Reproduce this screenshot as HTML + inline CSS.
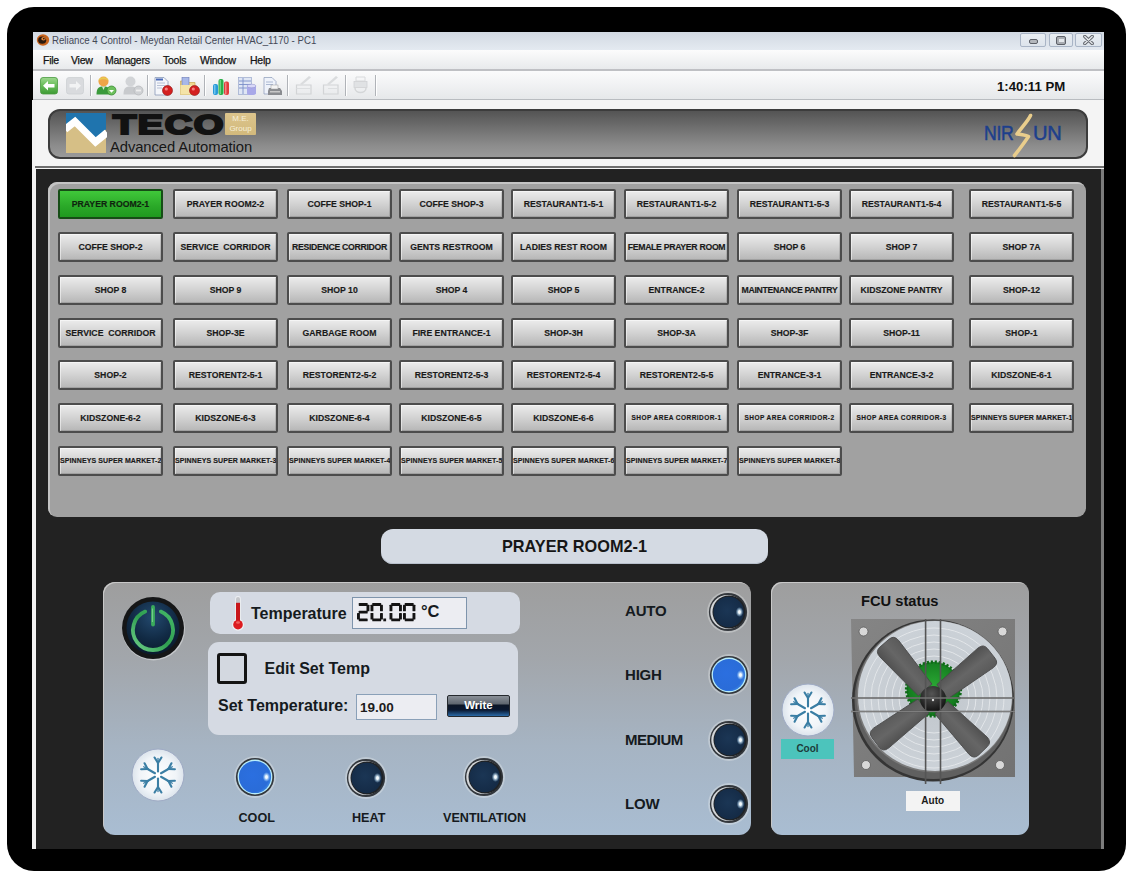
<!DOCTYPE html>
<html><head><meta charset="utf-8">
<style>
*{margin:0;padding:0;box-sizing:border-box}
html,body{width:1136px;height:881px;overflow:hidden;background:#fff;font-family:"Liberation Sans",sans-serif}
div,span,svg{position:absolute}
#frame{left:7px;top:7px;width:1119px;height:864px;background:#000;border-radius:27px}
#title{left:33px;top:32px;width:1071px;height:18px;background:linear-gradient(#d2d9e2,#e4eaf1);}
#ttext{left:51.5px;top:33.5px;font-size:11px;color:#444957;transform:scaleX(0.88);transform-origin:0 0;white-space:nowrap}
.wb{top:33px;height:14px;border:1px solid #a9b5c6;border-radius:2px;background:linear-gradient(#e8edf2,#dde4ec)}
#menu{left:33px;top:50px;width:1071px;height:21px;background:linear-gradient(#fcfcfc,#e8eaec);border-bottom:2px solid #bfc0c4}
.mi{top:54px;font-size:10.5px;color:#141414;white-space:nowrap;letter-spacing:-0.25px;-webkit-text-stroke:0.25px #141414}
#tool{left:33px;top:71px;width:1071px;height:29px;background:linear-gradient(#fbfbfc,#e6e8ea);border-bottom:1px solid #b9bcc0}
.sep{top:75px;width:1px;height:21px;background:#b0b3b8;box-shadow:1px 0 0 #fff}
#hdr{left:33px;top:100px;width:1071px;height:69px;background:#f4f4f4}
#hline{left:35px;top:165.5px;width:1069px;height:2px;background:#6e6e6e}
#dark{left:36px;top:169px;width:1065px;height:680px;background:#222}
#lstripe{left:32px;top:100px;width:4px;height:749px;background:#f2f2f2}
#rstripe{left:1101px;top:169px;width:3px;height:680px;background:#7c7c7c}
#banner{left:48px;top:109px;width:1040px;height:50px;border-radius:12px;border:2px solid #3c3c3c;background:linear-gradient(#545454,#8c8c8c 75%,#9a9a9a)}
#panel{left:48px;top:182px;width:1038px;height:335px;background:#a1a1a1;border-radius:9px;box-shadow:inset 2px 2px 0 #c4c4c4}
.b{width:105px;height:30px;border:2px solid #4c4c4c;border-radius:2px;background:linear-gradient(#ececec,#d2d2d2 50%,#b6b6b6);font-weight:bold;font-size:8.7px;color:#1a1a1a;-webkit-text-stroke:0.15px #1a1a1a;text-align:center;line-height:26px;white-space:nowrap;overflow:hidden;box-shadow:inset 1px 1px 0 rgba(255,255,255,0.5),inset -1px -1px 0 rgba(0,0,0,0.12)}
.b.g{background:linear-gradient(#40c83a,#2aa828 60%,#1f9a1f);border-color:#164d16;color:#0d260d;box-shadow:none}
.b.s{font-size:6.5px;letter-spacing:0.45px}
.b.n{letter-spacing:-0.3px}
.b.m{font-size:7px;letter-spacing:0.1px}
#rname{left:381px;top:529px;width:387px;height:35px;border-radius:12px;background:#d4dae3;box-shadow:inset 0 -1px 0 #b8c0cc}
#rtext{left:381px;top:537px;width:387px;text-align:center;font-weight:bold;font-size:16.3px;color:#161616}
#ctl{left:103px;top:582px;width:648px;height:253px;border-radius:12px;background:linear-gradient(#9e9e9e,#a2a6ab 30%,#a6b4c3 65%,#a9bdd2);box-shadow:inset 1px 1px 0 #c8c8c8}
#fcu{left:771px;top:582px;width:258px;height:253px;border-radius:11px;background:linear-gradient(#9e9e9e,#a2a6ab 30%,#a6b4c3 65%,#a9bdd2);box-shadow:inset 1px 1px 0 #c8c8c8}
.lbl{font-weight:bold;color:#151a20;white-space:nowrap}
</style></head><body>
<div id="frame"></div>
<div id="title"></div>
<svg style="left:36px;top:33px" width="14" height="14" viewBox="0 0 14 14">
  <ellipse cx="7" cy="7" rx="6.2" ry="5.8" fill="#c8641e"/>
  <ellipse cx="6.2" cy="7.2" rx="4" ry="3.6" fill="#2a1a10"/>
  <ellipse cx="7.5" cy="5.8" rx="2.2" ry="1.8" fill="#e8883a"/>
  <circle cx="7.8" cy="5.6" r="0.9" fill="#2a1a10"/>
</svg>

<div id="ttext">Reliance 4 Control - Meydan Retail Center HVAC_1170 - PC1</div>
<div class="wb" style="left:1020px;width:26px"></div>
<div class="wb" style="left:1049px;width:24px"></div>
<div class="wb" style="left:1075px;width:27px"></div>
<div style="left:1028.5px;top:38.5px;width:9.5px;height:5px;border:1.2px solid #5c6068;border-radius:2px;background:#b4b8bd"></div>
<div style="left:1056px;top:36px;width:10px;height:8.5px;border:1.3px solid #5c6068;border-radius:2px;background:#a8acb2"></div>
<div style="left:1058.5px;top:39px;width:5px;height:2.5px;background:#e4e8ec"></div>
<svg style="left:1083px;top:35px" width="11" height="10" viewBox="0 0 11 10"><path d="M1.8 1.5 L9.2 8.5 M9.2 1.5 L1.8 8.5" stroke="#63676e" stroke-width="3.4" stroke-linecap="round"/><path d="M1.8 1.5 L9.2 8.5 M9.2 1.5 L1.8 8.5" stroke="#e6e9ec" stroke-width="1.4" stroke-linecap="round"/></svg>

<div id="menu"></div>
<span class="mi" style="left:43px">File</span>
<span class="mi" style="left:71px">View</span>
<span class="mi" style="left:105px">Managers</span>
<span class="mi" style="left:163px">Tools</span>
<span class="mi" style="left:200px">Window</span>
<span class="mi" style="left:250px">Help</span>
<div id="tool"></div>
<div class="sep" style="left:90px"></div>
<div class="sep" style="left:147px"></div>
<div class="sep" style="left:204px"></div>
<div class="sep" style="left:287px"></div>
<div class="sep" style="left:345px"></div>
<div class="sep" style="left:375px"></div>
<svg style="left:40px;top:77px" width="18" height="18" viewBox="0 0 18 18">
  <defs><linearGradient id="tg1" x1="0" y1="0" x2="0" y2="1"><stop offset="0" stop-color="#9ed890"/><stop offset="0.45" stop-color="#6cbf5c"/><stop offset="1" stop-color="#3c9a34"/></linearGradient></defs>
  <rect x="0.5" y="0.5" width="17" height="16.5" rx="2.5" fill="url(#tg1)" stroke="#4a9a40" stroke-width="0.8"/>
  <path d="M3 8.7 L8 4 L8 7 L14.5 7 L14.5 10.5 L8 10.5 L8 13.5 Z" fill="#fff"/>
</svg>
<svg style="left:66px;top:77px" width="18" height="18" viewBox="0 0 18 18">
  <rect x="0.5" y="0.5" width="17" height="16.5" rx="2.5" fill="#d9dbde" stroke="#cdd0d3" stroke-width="0.8"/>
  <path d="M15 8.7 L10 4 L10 7 L3.5 7 L3.5 10.5 L10 10.5 L10 13.5 Z" fill="#f2f3f4"/>
</svg>
<svg style="left:95px;top:75px" width="22" height="21" viewBox="0 0 22 21">
  <path d="M1.5 19.5 C1.5 13 4 11.5 8.5 11.5 C13 11.5 15.5 13 15.5 19.5 Z" fill="#3a9a3c"/>
  <path d="M7 11.5 L8.5 15 L10 11.5 Z" fill="#d8e8d8"/>
  <circle cx="8.5" cy="6.5" r="5" fill="#eea448"/>
  <path d="M3.5 6 C3.5 1 13.5 1 13.5 6 C12 3.5 5 3.5 3.5 6 Z" fill="#e8c850"/>
  <circle cx="16.5" cy="15.5" r="4.5" fill="#6cc05c" stroke="#3a8a34" stroke-width="0.8"/>
  <path d="M14 15 L16.5 17.8 L19 15 Z" fill="#fff"/>
</svg>
<svg style="left:122px;top:75px" width="22" height="21" viewBox="0 0 22 21">
  <path d="M1.5 19.5 C1.5 13 4 11.5 8.5 11.5 C13 11.5 15.5 13 15.5 19.5 Z" fill="#c8cacd"/>
  <circle cx="8.5" cy="6.5" r="5" fill="#d2d4d7"/>
  <circle cx="16.5" cy="15.5" r="4.5" fill="#cfd1d4" stroke="#b8babd" stroke-width="0.8"/>
  <rect x="14" y="14.6" width="5" height="1.8" fill="#eee"/>
</svg>
<svg style="left:154px;top:77px" width="20" height="19" viewBox="0 0 20 19">
  <path d="M1 0.5 L10 0.5 L14 4.5 L14 18 L1 18 Z" fill="#f4f6fa" stroke="#8a9ab8" stroke-width="0.8"/>
  <rect x="2" y="1.5" width="7" height="2" fill="#4a6ab8"/>
  <g stroke="#a8b4cc" stroke-width="0.8"><line x1="3" y1="6" x2="11" y2="6"/><line x1="3" y1="8.5" x2="11" y2="8.5"/><line x1="3" y1="11" x2="8" y2="11"/></g>
  <circle cx="13.5" cy="13.5" r="5" fill="#d42020" stroke="#8a1010" stroke-width="0.6"/>
  <circle cx="12.3" cy="12" r="1.6" fill="#ff9a9a" opacity="0.8"/>
</svg>
<svg style="left:180px;top:77px" width="21" height="19" viewBox="0 0 21 19">
  <path d="M0.5 4 L6 4 L7.5 5.5 L15 5.5 L15 17.5 L0.5 17.5 Z" fill="#f0d890" stroke="#c8a850" stroke-width="0.7"/>
  <rect x="2" y="0.5" width="7" height="9" fill="#a8b8e8" stroke="#6878b8" stroke-width="0.6"/>
  <path d="M0.5 8 L15 8 L15 17.5 L0.5 17.5 Z" fill="#f4e4a8"/>
  <circle cx="14.5" cy="13.5" r="5" fill="#d42020" stroke="#8a1010" stroke-width="0.6"/>
  <circle cx="13.3" cy="12" r="1.6" fill="#ff9a9a" opacity="0.8"/>
</svg>
<svg style="left:212px;top:77px" width="18" height="19" viewBox="0 0 18 19">
  <rect x="1" y="7" width="5" height="11" rx="2" fill="#2a9ad8"/>
  <rect x="6.5" y="2" width="5" height="16" rx="2" fill="#28b048"/>
  <rect x="12" y="4.5" width="5" height="13.5" rx="2" fill="#e03c3c"/>
  <rect x="2" y="8" width="1.5" height="9" fill="#8ad4f8" opacity="0.7"/>
  <rect x="7.5" y="3" width="1.5" height="14" fill="#8ae0a0" opacity="0.7"/>
  <rect x="13" y="5.5" width="1.5" height="12" fill="#f8a0a0" opacity="0.7"/>
</svg>
<svg style="left:238px;top:77px" width="19" height="19" viewBox="0 0 19 19">
  <rect x="0.5" y="0.5" width="13" height="17" fill="#dfe6f4" stroke="#9aa8cc" stroke-width="0.7"/>
  <g stroke="#7a8ec8" stroke-width="0.9"><line x1="1" y1="4" x2="13" y2="4"/><line x1="1" y1="7.5" x2="13" y2="7.5"/><line x1="1" y1="11" x2="13" y2="11"/><line x1="5" y1="1" x2="5" y2="17"/></g>
  <path d="M9 9 L9 16.5 C9 18.5 18 18.5 18 16.5 L18 9 Z" fill="#a8a8e8"/>
  <ellipse cx="13.5" cy="9" rx="4.5" ry="1.8" fill="#d8d8f8" stroke="#8888c8" stroke-width="0.5"/>
</svg>
<svg style="left:263px;top:77px" width="20" height="19" viewBox="0 0 20 19">
  <path d="M1 0.5 L9 0.5 L13 4.5 L13 17 L1 17 Z" fill="#eef2fa" stroke="#8a9ab8" stroke-width="0.7"/>
  <g stroke="#9aaac8" stroke-width="0.8"><line x1="3" y1="5" x2="10" y2="5"/><line x1="3" y1="7.5" x2="10" y2="7.5"/></g>
  <path d="M6 11 L17 11 L19 14 L19 18 L5 18 L5 14 Z" fill="#8a8c90"/>
  <rect x="8" y="8" width="7" height="4" fill="#f4f4f4" stroke="#9a9a9a" stroke-width="0.5"/>
  <rect x="7" y="14" width="10" height="1.5" fill="#c8c8c8"/>
</svg>
<svg style="left:295px;top:75px" width="18" height="20" viewBox="0 0 18 20">
  <path d="M1.5 10 L16 10 L16 19 L1.5 19 Z" fill="none" stroke="#d2d4d6" stroke-width="1.2"/>
  <line x1="1.5" y1="13.5" x2="16" y2="13.5" stroke="#dcdee0" stroke-width="1"/>
  <path d="M5 9 L14 1 L16 2.5 L7 10 Z" fill="#dadcde"/>
</svg>
<svg style="left:322px;top:75px" width="18" height="20" viewBox="0 0 18 20">
  <path d="M1.5 10 L16 10 L16 19 L1.5 19 Z" fill="none" stroke="#d2d4d6" stroke-width="1.2"/>
  <line x1="6" y1="13.5" x2="16" y2="13.5" stroke="#dcdee0" stroke-width="1"/>
  <path d="M5 9 L14 1 L16 2.5 L7 10 Z" fill="#dadcde"/>
</svg>
<svg style="left:352px;top:75px" width="17" height="20" viewBox="0 0 17 20">
  <path d="M4 2 L13 2 L13 6 L4 6 Z" fill="none" stroke="#d8dadc" stroke-width="1"/>
  <rect x="2" y="6.5" width="13" height="6" fill="#e0e2e4" stroke="#d0d2d4" stroke-width="0.8"/>
  <path d="M3 13 C3 19 14 19 14 13" fill="none" stroke="#d4d6d8" stroke-width="1.5"/>
</svg>

<span class="lbl" style="left:997px;top:79px;font-size:13.2px;color:#111">1:40:11 PM</span>
<div id="hdr"></div>
<div id="lstripe"></div>
<div id="hline"></div>
<div id="dark"></div>
<div id="rstripe"></div>
<div id="banner"></div>
<svg style="left:66px;top:113px" width="41" height="41" viewBox="0 0 41 41">
  <rect x="0" y="0" width="40" height="40" fill="#d6bf86"/>
  <polygon points="0,0 40,0 40,16.5 29.5,25.5 9,4.5 0,12.5" fill="#1f74ae"/>
  <polyline points="-1,16.5 9,8.5 29.5,29 41,19.5" fill="none" stroke="#fff" stroke-width="7.2" stroke-linejoin="miter"/>
</svg>
<span style="left:113px;top:110px;font-weight:bold;font-size:28px;line-height:30px;color:#121212;transform:scaleX(1.36);transform-origin:0 0;-webkit-text-stroke:2.2px #121212;letter-spacing:1.1px">TECO</span>
<div style="left:225px;top:113px;width:31px;height:22px;background:linear-gradient(#dcc48c,#d2b97c);border-radius:1px"></div>
<span style="left:225px;top:113.5px;width:31px;text-align:center;font-size:8px;line-height:10px;color:#f6efd9">M.E.<br>Group</span>
<span style="left:110px;top:139px;font-size:14.8px;color:#161616;letter-spacing:-0.1px">Advanced Automation</span>
<span style="left:984px;top:122.5px;font-size:20.5px;line-height:20px;color:#1d3f8c;transform:scaleX(0.86);transform-origin:0 0;letter-spacing:-0.3px;-webkit-text-stroke:0.5px #1d3f8c">NIR</span>
<span style="left:1032.5px;top:122.5px;font-size:20.5px;line-height:20px;color:#1d3f8c;transform:scaleX(0.98);transform-origin:0 0;letter-spacing:-0.2px;-webkit-text-stroke:0.5px #1d3f8c">UN</span>
<svg style="left:1010px;top:113px" width="24" height="45" viewBox="0 0 24 45">
  <path d="M20.5 2.5 C18 8 12 14 7 21 C12 21.5 16 22 18.5 23.5 C14 30 9 37 4.5 42.5" fill="none" stroke="#e9cd8c" stroke-width="3.6" stroke-linecap="round" stroke-linejoin="round"/>
</svg>

<div id="panel"></div>
<!--BTN-->
<div class="b g" style="left:58px;top:189px">PRAYER ROOM2-1</div>
<div class="b" style="left:173px;top:189px">PRAYER ROOM2-2</div>
<div class="b" style="left:287px;top:189px">COFFE SHOP-1</div>
<div class="b" style="left:399px;top:189px">COFFE SHOP-3</div>
<div class="b" style="left:511px;top:189px">RESTAURANT1-5-1</div>
<div class="b" style="left:624px;top:189px">RESTAURANT1-5-2</div>
<div class="b" style="left:737px;top:189px">RESTAURANT1-5-3</div>
<div class="b" style="left:849px;top:189px">RESTAURANT1-5-4</div>
<div class="b" style="left:969px;top:189px">RESTAURANT1-5-5</div>
<div class="b" style="left:58px;top:232px">COFFE SHOP-2</div>
<div class="b" style="left:173px;top:232px">SERVICE&nbsp; CORRIDOR</div>
<div class="b n" style="left:287px;top:232px">RESIDENCE CORRIDOR</div>
<div class="b" style="left:399px;top:232px">GENTS RESTROOM</div>
<div class="b" style="left:511px;top:232px">LADIES REST ROOM</div>
<div class="b n" style="left:624px;top:232px">FEMALE PRAYER ROOM</div>
<div class="b" style="left:737px;top:232px">SHOP 6</div>
<div class="b" style="left:849px;top:232px">SHOP 7</div>
<div class="b" style="left:969px;top:232px">SHOP 7A</div>
<div class="b" style="left:58px;top:275px">SHOP 8</div>
<div class="b" style="left:173px;top:275px">SHOP 9</div>
<div class="b" style="left:287px;top:275px">SHOP 10</div>
<div class="b" style="left:399px;top:275px">SHOP 4</div>
<div class="b" style="left:511px;top:275px">SHOP 5</div>
<div class="b" style="left:624px;top:275px">ENTRANCE-2</div>
<div class="b n" style="left:737px;top:275px">MAINTENANCE PANTRY</div>
<div class="b" style="left:849px;top:275px">KIDSZONE PANTRY</div>
<div class="b" style="left:969px;top:275px">SHOP-12</div>
<div class="b" style="left:58px;top:318px">SERVICE&nbsp; CORRIDOR</div>
<div class="b" style="left:173px;top:318px">SHOP-3E</div>
<div class="b" style="left:287px;top:318px">GARBAGE ROOM</div>
<div class="b" style="left:399px;top:318px">FIRE ENTRANCE-1</div>
<div class="b" style="left:511px;top:318px">SHOP-3H</div>
<div class="b" style="left:624px;top:318px">SHOP-3A</div>
<div class="b" style="left:737px;top:318px">SHOP-3F</div>
<div class="b" style="left:849px;top:318px">SHOP-11</div>
<div class="b" style="left:969px;top:318px">SHOP-1</div>
<div class="b" style="left:58px;top:360px">SHOP-2</div>
<div class="b" style="left:173px;top:360px">RESTORENT2-5-1</div>
<div class="b" style="left:287px;top:360px">RESTORENT2-5-2</div>
<div class="b" style="left:399px;top:360px">RESTORENT2-5-3</div>
<div class="b" style="left:511px;top:360px">RESTORENT2-5-4</div>
<div class="b" style="left:624px;top:360px">RESTORENT2-5-5</div>
<div class="b" style="left:737px;top:360px">ENTRANCE-3-1</div>
<div class="b" style="left:849px;top:360px">ENTRANCE-3-2</div>
<div class="b" style="left:969px;top:360px">KIDSZONE-6-1</div>
<div class="b" style="left:58px;top:403px">KIDSZONE-6-2</div>
<div class="b" style="left:173px;top:403px">KIDSZONE-6-3</div>
<div class="b" style="left:287px;top:403px">KIDSZONE-6-4</div>
<div class="b" style="left:399px;top:403px">KIDSZONE-6-5</div>
<div class="b" style="left:511px;top:403px">KIDSZONE-6-6</div>
<div class="b s" style="left:624px;top:403px">SHOP AREA CORRIDOR-1</div>
<div class="b s" style="left:737px;top:403px">SHOP AREA CORRIDOR-2</div>
<div class="b s" style="left:849px;top:403px">SHOP AREA CORRIDOR-3</div>
<div class="b m" style="left:969px;top:403px">SPINNEYS SUPER MARKET-1</div>
<div class="b m" style="left:58px;top:446px">SPINNEYS SUPER MARKET-2</div>
<div class="b m" style="left:173px;top:446px">SPINNEYS SUPER MARKET-3</div>
<div class="b m" style="left:287px;top:446px">SPINNEYS SUPER MARKET-4</div>
<div class="b m" style="left:399px;top:446px">SPINNEYS SUPER MARKET-5</div>
<div class="b m" style="left:511px;top:446px">SPINNEYS SUPER MARKET-6</div>
<div class="b m" style="left:624px;top:446px">SPINNEYS SUPER MARKET-7</div>
<div class="b m" style="left:737px;top:446px">SPINNEYS SUPER MARKET-8</div>
<!--/BTN-->
<div id="rname"></div>
<div id="rtext">PRAYER ROOM2-1</div>
<div id="ctl"></div>
<div id="fcu"></div>
<svg style="left:120px;top:595px" width="66" height="66" viewBox="0 0 66 66">
  <defs>
    <radialGradient id="pwg" cx="50%" cy="30%" r="70%"><stop offset="0" stop-color="#23496e"/><stop offset="0.6" stop-color="#112a44"/><stop offset="1" stop-color="#0a1a2c"/></radialGradient>
    <linearGradient id="pwr" x1="0" y1="1" x2="1" y2="0"><stop offset="0" stop-color="#6fd08a"/><stop offset="0.5" stop-color="#2f9e50"/><stop offset="1" stop-color="#45b868"/></linearGradient>
  </defs>
  <circle cx="33.5" cy="34" r="31.5" fill="#e6e8ea" opacity="0.5"/>
  <circle cx="33" cy="33" r="31" fill="#151617"/>
  <circle cx="33" cy="33" r="26.5" fill="url(#pwg)"/>
  <path d="M25.2 16.6 A20 20 0 1 0 40.8 16.6" fill="none" stroke="url(#pwr)" stroke-width="3.8" stroke-linecap="round"/>
  <line x1="33" y1="12" x2="33" y2="29.5" stroke="#3aab5c" stroke-width="3.8" stroke-linecap="round"/>
  <line x1="32.4" y1="13.5" x2="32.4" y2="27" stroke="#a8e8b8" stroke-width="1" opacity="0.6"/>
</svg>
<div style="left:210px;top:592px;width:310px;height:42px;border-radius:10px;background:#d5dae3"></div>
<svg style="left:230px;top:595px" width="16" height="38" viewBox="0 0 16 38">
  <rect x="5.2" y="1" width="5.6" height="29" rx="2.8" fill="#eef0f3"/>
  <circle cx="8" cy="29.7" r="6" fill="#eef0f3"/>
  <rect x="6" y="2" width="4" height="27" rx="2" fill="#c4c6ca"/>
  <rect x="6" y="7.8" width="4" height="22" fill="#c8161a"/>
  <circle cx="8" cy="29.7" r="4.8" fill="#dc1c20"/>
  <ellipse cx="8" cy="27.5" rx="2" ry="1.2" fill="#ff9a90" opacity="0.55"/>
</svg>
<span class="lbl" style="left:251px;top:604.8px;font-size:16px;letter-spacing:0px">Temperature</span>
<div style="left:352px;top:597px;width:115px;height:32px;border:1px solid #7e94ac;background:#ecedf2"></div>
<svg style="left:340px;top:595px" width="90" height="35" viewBox="0 0 90 35"><g fill="#141414"><rect x="18.74" y="8.00" width="8.92" height="2.90" rx="0.6"/><rect x="26.50" y="9.74" width="2.90" height="6.54" rx="0.6"/><rect x="18.74" y="15.70" width="8.92" height="2.90" rx="0.6"/><rect x="17.00" y="18.02" width="2.90" height="6.54" rx="0.6"/><rect x="18.74" y="23.40" width="8.92" height="2.90" rx="0.6"/><rect x="32.24" y="8.00" width="8.92" height="2.90" rx="0.6"/><rect x="40.00" y="9.74" width="2.90" height="6.54" rx="0.6"/><rect x="40.00" y="18.02" width="2.90" height="6.54" rx="0.6"/><rect x="32.24" y="23.40" width="8.92" height="2.90" rx="0.6"/><rect x="30.50" y="18.02" width="2.90" height="6.54" rx="0.6"/><rect x="30.50" y="9.74" width="2.90" height="6.54" rx="0.6"/><rect x="51.24" y="8.00" width="8.92" height="2.90" rx="0.6"/><rect x="59.00" y="9.74" width="2.90" height="6.54" rx="0.6"/><rect x="59.00" y="18.02" width="2.90" height="6.54" rx="0.6"/><rect x="51.24" y="23.40" width="8.92" height="2.90" rx="0.6"/><rect x="49.50" y="18.02" width="2.90" height="6.54" rx="0.6"/><rect x="49.50" y="9.74" width="2.90" height="6.54" rx="0.6"/><rect x="64.74" y="8.00" width="8.92" height="2.90" rx="0.6"/><rect x="72.50" y="9.74" width="2.90" height="6.54" rx="0.6"/><rect x="72.50" y="18.02" width="2.90" height="6.54" rx="0.6"/><rect x="64.74" y="23.40" width="8.92" height="2.90" rx="0.6"/><rect x="63.00" y="18.02" width="2.90" height="6.54" rx="0.6"/><rect x="63.00" y="9.74" width="2.90" height="6.54" rx="0.6"/><rect x="43.3" y="23.5" width="2.8" height="2.8"/></g></svg>
<span class="lbl" style="left:421px;top:601.5px;font-size:16.5px">°C</span>
<div style="left:208px;top:642px;width:310px;height:93px;border-radius:11px;background:#d5dae3"></div>
<div style="left:217px;top:653px;width:30px;height:31px;border:3px solid #141414;border-radius:3px;background:#d3d8e0"></div>
<span class="lbl" style="left:264.5px;top:659.5px;font-size:16px">Edit Set Temp</span>
<span class="lbl" style="left:218px;top:697px;font-size:16px">Set Temperature:</span>
<div style="left:356px;top:694px;width:81px;height:26px;border:1px solid #8aa0b8;background:#ecedf2"></div>
<span class="lbl" style="left:360px;top:699.5px;font-size:13.5px;color:#1c1c1c">19.00</span>
<div style="left:447px;top:694.5px;width:63px;height:22px;border:1px solid #25292e;border-radius:2px;background:linear-gradient(#8a9098,#5e666f 40%,#0c1626 45%,#0a1830 70%,#2a6aa8 100%)"></div>
<span class="lbl" style="left:447px;width:63px;text-align:center;top:698.5px;font-size:11.5px;color:#fff">Write</span>
<svg style="left:130.0px;top:746.7px" width="56" height="56" viewBox="0 0 56 56"><defs><radialGradient id="sg1" cx="50%" cy="50%" r="50%"><stop offset="0" stop-color="#ffffff"/><stop offset="0.7" stop-color="#f0f4f8"/><stop offset="1" stop-color="#dce4ec"/></radialGradient></defs>
<circle cx="28.0" cy="28.0" r="26" fill="url(#sg1)" stroke="#9eaac4" stroke-width="1"/>
<g stroke="#3a7ea4" stroke-width="2.1" stroke-linecap="round"><line x1="28.00" y1="24.50" x2="28.00" y2="16.00"/><line x1="28.00" y1="16.00" x2="24.56" y2="10.49"/><line x1="28.00" y1="16.00" x2="31.44" y2="10.49"/><line x1="28.00" y1="16.00" x2="28.00" y2="11.50" stroke-width="1.3"/><line x1="24.97" y1="26.25" x2="17.61" y2="22.00"/><line x1="17.61" y1="22.00" x2="11.11" y2="22.23"/><line x1="17.61" y1="22.00" x2="14.56" y2="16.26"/><line x1="17.61" y1="22.00" x2="13.71" y2="19.75" stroke-width="1.3"/><line x1="24.97" y1="29.75" x2="17.61" y2="34.00"/><line x1="17.61" y1="34.00" x2="14.56" y2="39.74"/><line x1="17.61" y1="34.00" x2="11.11" y2="33.77"/><line x1="17.61" y1="34.00" x2="13.71" y2="36.25" stroke-width="1.3"/><line x1="28.00" y1="31.50" x2="28.00" y2="40.00"/><line x1="28.00" y1="40.00" x2="31.44" y2="45.51"/><line x1="28.00" y1="40.00" x2="24.56" y2="45.51"/><line x1="28.00" y1="40.00" x2="28.00" y2="44.50" stroke-width="1.3"/><line x1="31.03" y1="29.75" x2="38.39" y2="34.00"/><line x1="38.39" y1="34.00" x2="44.89" y2="33.77"/><line x1="38.39" y1="34.00" x2="41.44" y2="39.74"/><line x1="38.39" y1="34.00" x2="42.29" y2="36.25" stroke-width="1.3"/><line x1="31.03" y1="26.25" x2="38.39" y2="22.00"/><line x1="38.39" y1="22.00" x2="41.44" y2="16.26"/><line x1="38.39" y1="22.00" x2="44.89" y2="22.23"/><line x1="38.39" y1="22.00" x2="42.29" y2="19.75" stroke-width="1.3"/></g></svg>
<svg style="left:232.1px;top:754.0px" width="46" height="46" viewBox="0 0 46 46"><defs><radialGradient id="lg0" cx="42%" cy="45%" r="60%"><stop offset="0" stop-color="#2b6fe0"/><stop offset="0.85" stop-color="#2a6cd8"/><stop offset="1" stop-color="#3a86e6"/></radialGradient><radialGradient id="lh0"><stop offset="0" stop-color="#fff"/><stop offset="0.3" stop-color="#f0faff" stop-opacity="0.95"/><stop offset="1" stop-color="#9fd6ff" stop-opacity="0"/></radialGradient></defs>
<circle cx="23.0" cy="23.0" r="20.900000000000002" fill="#eef0f2" opacity="0.35"/>
<circle cx="23.0" cy="23.0" r="19.1" fill="#33373c"/>
<circle cx="23.0" cy="23.0" r="17.400000000000002" fill="#b8ecfa"/><circle cx="23.0" cy="23.0" r="16.1" fill="url(#lg0)"/>
<ellipse cx="34.46" cy="23.0" rx="3.8" ry="5" fill="url(#lh0)"/>
</svg>
<svg style="left:343.0px;top:754.5px" width="46" height="46" viewBox="0 0 46 46"><defs><radialGradient id="lg1" cx="45%" cy="45%" r="60%"><stop offset="0" stop-color="#1b3655"/><stop offset="1" stop-color="#142a45"/></radialGradient><radialGradient id="lh1"><stop offset="0" stop-color="#fff"/><stop offset="0.3" stop-color="#f0faff" stop-opacity="0.95"/><stop offset="1" stop-color="#9fd6ff" stop-opacity="0"/></radialGradient></defs>
<circle cx="23.0" cy="23.0" r="20.900000000000002" fill="#eef0f2" opacity="0.35"/>
<circle cx="23.0" cy="23.0" r="19.1" fill="#33373c"/>
<circle cx="22.4" cy="23.0" r="17.1" fill="#d4d7da"/><circle cx="24.0" cy="23.0" r="16.5" fill="#1f2225"/><circle cx="23.6" cy="23.0" r="15.200000000000001" fill="url(#lg1)"/>
<ellipse cx="34.46" cy="23.0" rx="3.8" ry="5" fill="url(#lh1)"/>
</svg>
<svg style="left:460.5px;top:754.3px" width="46" height="46" viewBox="0 0 46 46"><defs><radialGradient id="lg2" cx="45%" cy="45%" r="60%"><stop offset="0" stop-color="#1b3655"/><stop offset="1" stop-color="#142a45"/></radialGradient><radialGradient id="lh2"><stop offset="0" stop-color="#fff"/><stop offset="0.3" stop-color="#f0faff" stop-opacity="0.95"/><stop offset="1" stop-color="#9fd6ff" stop-opacity="0"/></radialGradient></defs>
<circle cx="23.0" cy="23.0" r="20.900000000000002" fill="#eef0f2" opacity="0.35"/>
<circle cx="23.0" cy="23.0" r="19.1" fill="#33373c"/>
<circle cx="22.4" cy="23.0" r="17.1" fill="#d4d7da"/><circle cx="24.0" cy="23.0" r="16.5" fill="#1f2225"/><circle cx="23.6" cy="23.0" r="15.200000000000001" fill="url(#lg2)"/>
<ellipse cx="34.46" cy="23.0" rx="3.8" ry="5" fill="url(#lh2)"/>
</svg>
<svg style="left:705.3px;top:589.4px" width="46" height="46" viewBox="0 0 46 46"><defs><radialGradient id="lg3" cx="45%" cy="45%" r="60%"><stop offset="0" stop-color="#1b3655"/><stop offset="1" stop-color="#142a45"/></radialGradient><radialGradient id="lh3"><stop offset="0" stop-color="#fff"/><stop offset="0.3" stop-color="#f0faff" stop-opacity="0.95"/><stop offset="1" stop-color="#9fd6ff" stop-opacity="0"/></radialGradient></defs>
<circle cx="23.0" cy="23.0" r="20.900000000000002" fill="#eef0f2" opacity="0.35"/>
<circle cx="23.0" cy="23.0" r="19.1" fill="#33373c"/>
<circle cx="22.4" cy="23.0" r="17.1" fill="#d4d7da"/><circle cx="24.0" cy="23.0" r="16.5" fill="#1f2225"/><circle cx="23.6" cy="23.0" r="15.200000000000001" fill="url(#lg3)"/>
<ellipse cx="34.46" cy="23.0" rx="3.8" ry="5" fill="url(#lh3)"/>
</svg>
<svg style="left:705.5px;top:652.0px" width="46" height="46" viewBox="0 0 46 46"><defs><radialGradient id="lg4" cx="42%" cy="45%" r="60%"><stop offset="0" stop-color="#2b6fe0"/><stop offset="0.85" stop-color="#2a6cd8"/><stop offset="1" stop-color="#3a86e6"/></radialGradient><radialGradient id="lh4"><stop offset="0" stop-color="#fff"/><stop offset="0.3" stop-color="#f0faff" stop-opacity="0.95"/><stop offset="1" stop-color="#9fd6ff" stop-opacity="0"/></radialGradient></defs>
<circle cx="23.0" cy="23.0" r="20.900000000000002" fill="#eef0f2" opacity="0.35"/>
<circle cx="23.0" cy="23.0" r="19.1" fill="#33373c"/>
<circle cx="23.0" cy="23.0" r="17.400000000000002" fill="#b8ecfa"/><circle cx="23.0" cy="23.0" r="16.1" fill="url(#lg4)"/>
<ellipse cx="34.46" cy="23.0" rx="3.8" ry="5" fill="url(#lh4)"/>
</svg>
<svg style="left:705.5px;top:717.0px" width="46" height="46" viewBox="0 0 46 46"><defs><radialGradient id="lg5" cx="45%" cy="45%" r="60%"><stop offset="0" stop-color="#1b3655"/><stop offset="1" stop-color="#142a45"/></radialGradient><radialGradient id="lh5"><stop offset="0" stop-color="#fff"/><stop offset="0.3" stop-color="#f0faff" stop-opacity="0.95"/><stop offset="1" stop-color="#9fd6ff" stop-opacity="0"/></radialGradient></defs>
<circle cx="23.0" cy="23.0" r="20.900000000000002" fill="#eef0f2" opacity="0.35"/>
<circle cx="23.0" cy="23.0" r="19.1" fill="#33373c"/>
<circle cx="22.4" cy="23.0" r="17.1" fill="#d4d7da"/><circle cx="24.0" cy="23.0" r="16.5" fill="#1f2225"/><circle cx="23.6" cy="23.0" r="15.200000000000001" fill="url(#lg5)"/>
<ellipse cx="34.46" cy="23.0" rx="3.8" ry="5" fill="url(#lh5)"/>
</svg>
<svg style="left:705.5px;top:781.0px" width="46" height="46" viewBox="0 0 46 46"><defs><radialGradient id="lg6" cx="45%" cy="45%" r="60%"><stop offset="0" stop-color="#1b3655"/><stop offset="1" stop-color="#142a45"/></radialGradient><radialGradient id="lh6"><stop offset="0" stop-color="#fff"/><stop offset="0.3" stop-color="#f0faff" stop-opacity="0.95"/><stop offset="1" stop-color="#9fd6ff" stop-opacity="0"/></radialGradient></defs>
<circle cx="23.0" cy="23.0" r="20.900000000000002" fill="#eef0f2" opacity="0.35"/>
<circle cx="23.0" cy="23.0" r="19.1" fill="#33373c"/>
<circle cx="22.4" cy="23.0" r="17.1" fill="#d4d7da"/><circle cx="24.0" cy="23.0" r="16.5" fill="#1f2225"/><circle cx="23.6" cy="23.0" r="15.200000000000001" fill="url(#lg6)"/>
<ellipse cx="34.46" cy="23.0" rx="3.8" ry="5" fill="url(#lh6)"/>
</svg>
<span class="lbl" style="left:238.5px;top:811px;font-size:12.6px">COOL</span>
<span class="lbl" style="left:352px;top:811px;font-size:12.6px">HEAT</span>
<span class="lbl" style="left:443px;top:811px;font-size:12.6px">VENTILATION</span>
<span class="lbl" style="left:625px;top:601.5px;font-size:15px;letter-spacing:-0.2px">AUTO</span>
<span class="lbl" style="left:625px;top:666px;font-size:15px;letter-spacing:-0.2px">HIGH</span>
<span class="lbl" style="left:625px;top:730.5px;font-size:15px;letter-spacing:-0.5px">MEDIUM</span>
<span class="lbl" style="left:625px;top:794.5px;font-size:15px;letter-spacing:-0.2px">LOW</span>

<span class="lbl" style="left:861px;top:592.5px;font-size:14.7px;color:#111">FCU status</span>
<svg style="left:780.0px;top:682.0px" width="56" height="56" viewBox="0 0 56 56"><defs><radialGradient id="sg2" cx="50%" cy="50%" r="50%"><stop offset="0" stop-color="#ffffff"/><stop offset="0.7" stop-color="#f0f4f8"/><stop offset="1" stop-color="#dce4ec"/></radialGradient></defs>
<circle cx="28.0" cy="28.0" r="26" fill="url(#sg2)" stroke="#9eaac4" stroke-width="1"/>
<g stroke="#3a7ea4" stroke-width="2.1" stroke-linecap="round"><line x1="28.00" y1="24.50" x2="28.00" y2="16.00"/><line x1="28.00" y1="16.00" x2="24.56" y2="10.49"/><line x1="28.00" y1="16.00" x2="31.44" y2="10.49"/><line x1="28.00" y1="16.00" x2="28.00" y2="11.50" stroke-width="1.3"/><line x1="24.97" y1="26.25" x2="17.61" y2="22.00"/><line x1="17.61" y1="22.00" x2="11.11" y2="22.23"/><line x1="17.61" y1="22.00" x2="14.56" y2="16.26"/><line x1="17.61" y1="22.00" x2="13.71" y2="19.75" stroke-width="1.3"/><line x1="24.97" y1="29.75" x2="17.61" y2="34.00"/><line x1="17.61" y1="34.00" x2="14.56" y2="39.74"/><line x1="17.61" y1="34.00" x2="11.11" y2="33.77"/><line x1="17.61" y1="34.00" x2="13.71" y2="36.25" stroke-width="1.3"/><line x1="28.00" y1="31.50" x2="28.00" y2="40.00"/><line x1="28.00" y1="40.00" x2="31.44" y2="45.51"/><line x1="28.00" y1="40.00" x2="24.56" y2="45.51"/><line x1="28.00" y1="40.00" x2="28.00" y2="44.50" stroke-width="1.3"/><line x1="31.03" y1="29.75" x2="38.39" y2="34.00"/><line x1="38.39" y1="34.00" x2="44.89" y2="33.77"/><line x1="38.39" y1="34.00" x2="41.44" y2="39.74"/><line x1="38.39" y1="34.00" x2="42.29" y2="36.25" stroke-width="1.3"/><line x1="31.03" y1="26.25" x2="38.39" y2="22.00"/><line x1="38.39" y1="22.00" x2="41.44" y2="16.26"/><line x1="38.39" y1="22.00" x2="44.89" y2="22.23"/><line x1="38.39" y1="22.00" x2="42.29" y2="19.75" stroke-width="1.3"/></g></svg>
<div style="left:781px;top:739px;width:53px;height:19.5px;background:#4cc4bc"></div>
<span class="lbl" style="left:781px;width:53px;text-align:center;top:743px;font-size:10px;color:#1d3b3a">Cool</span>
<svg style="left:845px;top:612px" width="180" height="180" viewBox="0 0 180 180">
  <defs>
    <linearGradient id="fsq" x1="0" y1="0" x2="1" y2="1"><stop offset="0" stop-color="#858585"/><stop offset="1" stop-color="#727272"/></linearGradient>
    <radialGradient id="fdisc" cx="50%" cy="50%" r="50%"><stop offset="0" stop-color="#c0c6cc"/><stop offset="1" stop-color="#ccd2d8"/></radialGradient>
    <linearGradient id="fbl" x1="0" y1="0" x2="1" y2="0"><stop offset="0" stop-color="#505050"/><stop offset="0.5" stop-color="#666"/><stop offset="1" stop-color="#5a5a5a"/></linearGradient>
    <radialGradient id="fhub" cx="45%" cy="30%" r="65%"><stop offset="0" stop-color="#555"/><stop offset="1" stop-color="#161616"/></radialGradient>
    <radialGradient id="fgear" cx="50%" cy="45%" r="50%"><stop offset="0" stop-color="#2aa834"/><stop offset="1" stop-color="#137a1e"/></radialGradient>
  </defs>
  <polygon points="6,7 170,7 170,165 9,165" fill="url(#fsq)"/>
  <g fill="#d8d8d8" stroke="#5a5a5a" stroke-width="0.8">
    <circle cx="18.5" cy="19.5" r="4.5"/><circle cx="157.5" cy="19.5" r="4.5"/>
    <circle cx="21" cy="153" r="4.5"/><circle cx="155" cy="153" r="4.5"/>
  </g>
  <circle cx="88" cy="88.5" r="81" fill="#353535"/>
  <circle cx="88.5" cy="88" r="79" fill="#606060"/>
  <ellipse cx="89.5" cy="84.5" rx="78" ry="76" fill="#7a7a7a"/>
  <ellipse cx="90" cy="84" rx="77" ry="75" fill="url(#fdisc)"/>
  <g fill="none" stroke="#e8ebee" stroke-width="1" opacity="0.85">
    <circle cx="89" cy="86" r="70"/><circle cx="89" cy="86" r="63"/><circle cx="89" cy="86" r="56"/><circle cx="89" cy="86" r="49"/><circle cx="89" cy="86" r="42"/><circle cx="89" cy="86" r="35"/>
  </g>
  <g transform="translate(88.5,77)">
    <circle r="27" fill="url(#fgear)"/>
    <circle r="27" fill="none" stroke="#0f6a18" stroke-width="3.2" stroke-dasharray="2.2 1.8"/>
  </g>
  <g transform="translate(88,87)" fill="url(#fbl)" stroke="#474747" stroke-width="0.8">
    <path transform="rotate(-41)" d="M-9,-12 L-12.5,-67 Q-12.5,-74 -6,-74 L6,-74 Q12.5,-74 12.5,-67 L9,-12 Z"/>
    <path transform="rotate(52)" d="M-9,-12 L-12.5,-67 Q-12.5,-74 -6,-74 L6,-74 Q12.5,-74 12.5,-67 L9,-12 Z"/>
    <path transform="rotate(136)" d="M-9,-12 L-12.5,-65 Q-12.5,-72 -6,-72 L6,-72 Q12.5,-72 12.5,-65 L9,-12 Z"/>
    <path transform="rotate(-127)" d="M-9,-12 L-12.5,-65 Q-12.5,-72 -6,-72 L6,-72 Q12.5,-72 12.5,-65 L9,-12 Z"/>
  </g>
  <circle cx="88" cy="87" r="13" fill="url(#fhub)"/>
  <circle cx="88" cy="88" r="1.2" fill="#ddd"/>
  <g stroke="#555" stroke-width="1.6">
    <line x1="6" y1="86" x2="170" y2="86"/><line x1="6" y1="99.5" x2="170" y2="99.5"/>
    <line x1="80.6" y1="7" x2="80.6" y2="172"/><line x1="95.5" y1="7" x2="95.5" y2="172"/>
  </g>
  <g stroke="#a8a8a8" stroke-width="0.5">
    <line x1="6" y1="86" x2="170" y2="86"/><line x1="6" y1="99.5" x2="170" y2="99.5"/>
  </g>
</svg>

<div style="left:906px;top:790.5px;width:53.5px;height:20px;background:#f3f3f3"></div>
<span class="lbl" style="left:906px;width:53.5px;text-align:center;top:794.5px;font-size:10px;color:#1a1a1a">Auto</span>

</body></html>
